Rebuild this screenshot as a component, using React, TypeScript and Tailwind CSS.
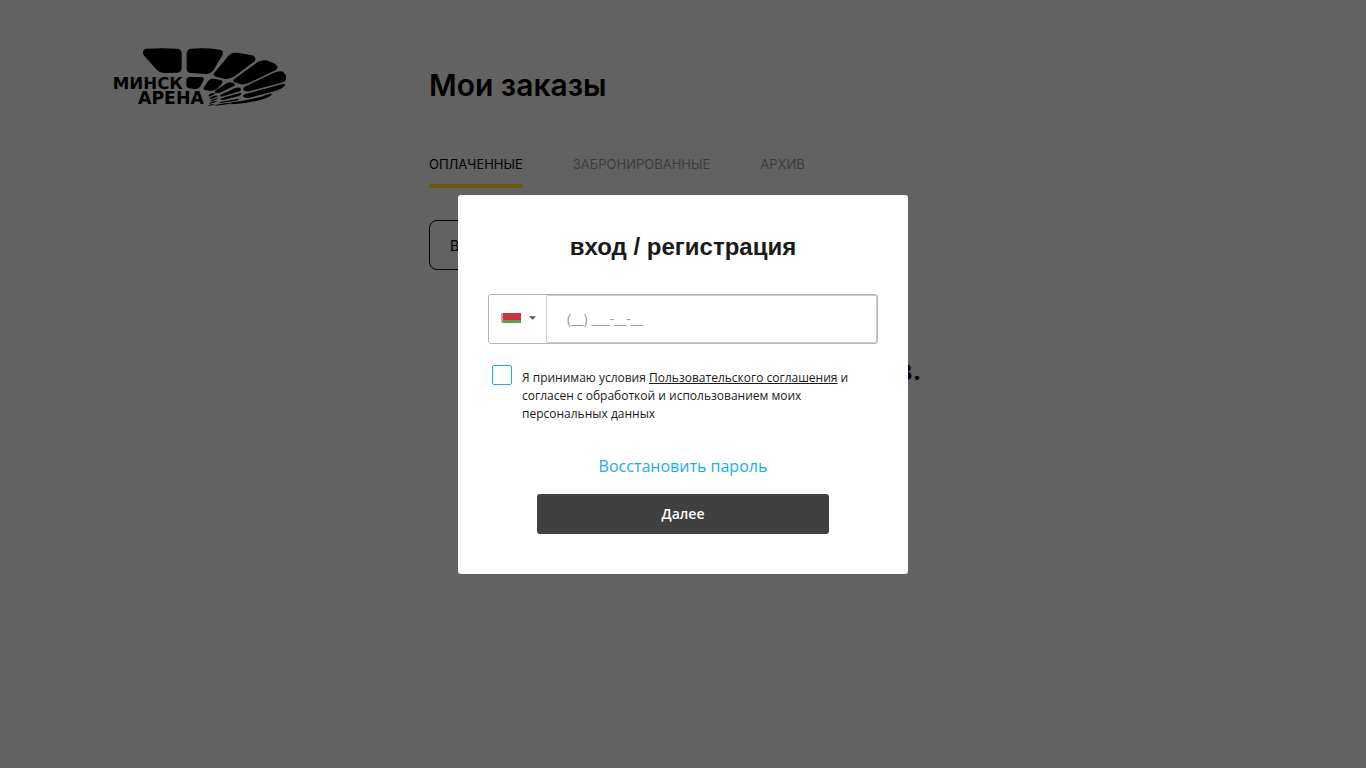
import { useState } from 'react'

const TABS = ['Оплаченные', 'Забронированные', 'Архив']

// Outer and inner petals of the arena mark
const PETALS = [
  'M96 2Q140 -1 190 2Q203 4 203 16V60Q202 73 190 74L152 75Q138 75 129 66L91 24Q80 7 96 2Z',
  'M230 2Q270 -2 318 5Q331 9 325 22L300 64Q292 78 276 78L232 75Q218 74 218 62V16Q219 4 230 2Z',
  'M301 74L345 22Q355 12 370 14L415 22Q429 28 422 40L362 85Q345 95 330 92L306 86Q294 82 301 74Z',
  'M362 92L430 43Q443 35 458 37L484 48Q496 57 486 66L402 106Q388 111 378 108L362 103Q353 99 362 92Z',
  'M391 117L478 75Q496 67 508 72Q518 80 516 94Q514 102 502 104L406 130Q380 131 391 117Z',
  'M391 139L503 109Q518 106 512 114Q502 124 480 130L404 150Q380 150 391 139Z',
  'M352 163Q415 157 465 138Q478 134 470 143Q440 162 352 169Z',
  'M226 87H262Q273 89 268 99L258 117Q252 124 240 123L226 121Q217 120 217 111V96Q218 88 226 87Z',
  'M270 118L283 98Q289 91 298 92L320 96Q330 101 323 108L309 122Q298 130 288 128L274 126Q265 124 270 118Z',
  'M308 125L335 107Q346 101 357 104Q368 109 358 115L322 132Q312 137 304 134Q300 129 308 125Z',
  'M320 140L364 120Q376 116 381 123Q382 129 372 131L328 145Q312 146 320 140Z',
  'M322 151L374 136Q386 133 381 140Q374 145 362 147L328 156Q314 155 322 151Z',
  'M320 162L368 153Q382 150 370 157Q350 162 314 166Z',
  'M304 171Q334 164 356 164Q348 169 304 173Z',
  'M284 141Q294 132 304 136Q300 141 285 146Z',
  'M287 150Q300 141 312 143Q308 149 288 153Z',
  'M288 158Q302 151 313 151Q308 157 288 160Z',
  'M286 165Q298 159 310 159Q302 165 286 167Z',
  'M283 172Q293 168 304 168Q296 173 283 174Z',
]

function Logo() {
  return (
    <a href="#" aria-label="Минск Арена" className="block">
      <svg viewBox="0 0 519 174" className="h-[58px] w-[173px] overflow-visible" fill="#000">
        {PETALS.map((d) => (
          <path key={d} d={d} />
        ))}
        <g fontFamily="DejaVu Sans" fontWeight="700">
          <text x="-4" y="123" fontSize="50">МИНСК</text>
          <text x="72" y="168" fontSize="52">АРЕНА</text>
        </g>
      </svg>
    </a>
  )
}

function BelarusFlag() {
  return (
    <svg viewBox="0 0 20 10" className="h-[10px] w-5">
      <rect width="20" height="7" fill="#cf323d" />
      <rect y="7" width="20" height="3" fill="#4fa657" />
      <rect width="2" height="10" fill="#e9a3a9" />
      <path d="M0 1l1 1-1 1M2 3L1 4l1 1M0 5l1 1-1 1M2 7L1 8l1 1" stroke="#cf323d" strokeWidth=".3" fill="none" />
    </svg>
  )
}

function LoginModal() {
  const [phone, setPhone] = useState('')
  const [accepted, setAccepted] = useState(false)

  return (
    <div className="fixed inset-0 flex items-center justify-center bg-black/60">
      <form
        role="dialog"
        aria-labelledby="login-title"
        className="flex w-full max-w-[450px] flex-col rounded-[3px] bg-white px-[30px] pt-9 pb-10 font-['Open_Sans',sans-serif] text-[#1a1a1a]"
      >
        <h2 id="login-title" className="mb-[31px] text-center font-['Liberation_Sans',sans-serif] text-2xl leading-8 font-bold">
          вход / регистрация
        </h2>

        <div className="flex h-[50px] rounded-[3px] border border-[#b5b5b5]">
          <button type="button" aria-label="Код страны" className="flex w-[57px] items-center gap-2 pb-0.5 pl-3">
            <BelarusFlag />
            <svg viewBox="0 0 8 4" className="h-1 w-[7px]" fill="#555">
              <path d="M0 0h8L4 4z" />
            </svg>
          </button>
          <input
            type="tel"
            aria-label="Телефон"
            placeholder="(__) ___-__-__"
            value={phone}
            onChange={(e) => setPhone(e.target.value)}
            className="min-w-0 flex-1 rounded-[2px] border border-[#ccc] px-5 text-sm outline-none placeholder:text-[#999]"
          />
        </div>

        <div className="mt-[21px] flex gap-[10px] pl-1">
          <input
            id="terms"
            type="checkbox"
            checked={accepted}
            onChange={(e) => setAccepted(e.target.checked)}
            className="size-5 shrink-0 appearance-none rounded-[2px] border border-[#1babf7] bg-white checked:bg-[#1babf7]"
          />
          <label htmlFor="terms" className="pt-1 text-xs leading-[18px]">
            Я принимаю условия{' '}
            <a href="#" className="underline">Пользовательского соглашения</a> и согласен с обработкой и
            использованием моих персональных данных
          </label>
        </div>

        <a href="#" className="mt-[31px] self-center text-base leading-6 text-[#1babf7]">
          Восстановить пароль
        </a>
        <button type="button" className="mx-auto mt-4 h-10 w-3/4 rounded-[3px] bg-[#404040] text-sm font-semibold text-white">
          Далее
        </button>
      </form>
    </div>
  )
}

export default function App() {
  return (
    <div className="min-h-screen bg-[#f6f6f6] font-['Inter',sans-serif] text-black">
      <div className="mx-auto flex max-w-[1140px] pt-12">
        <aside className="w-[316px] shrink-0 pl-px">
          <Logo />
        </aside>
        <main className="flex-1 pt-[17px]">
          <h1 className="text-[30px] leading-10 font-semibold">Мои заказы</h1>

          <nav className="mt-12 flex gap-[50px]">
            {TABS.map((tab, i) => (
              <a
                key={tab}
                href="#"
                className={
                  i === 0
                    ? 'text-[13px] leading-[22px] uppercase'
                    : 'text-[13px] leading-[22px] text-[#999] uppercase'
                }
              >
                {tab}
                {i === 0 && <span className="mt-[9px] block h-1 rounded-[2px] bg-[#ffe600]" />}
              </a>
            ))}
          </nav>

          <button type="button" className="mt-8 block h-[50px] w-[200px] rounded-lg border border-black px-5 pt-px text-left text-sm">
            Все
          </button>

          <p className="mt-20 pr-4 text-center text-[28px] leading-10 font-semibold">Нет заказов.</p>
        </main>
      </div>

      <LoginModal />
    </div>
  )
}
